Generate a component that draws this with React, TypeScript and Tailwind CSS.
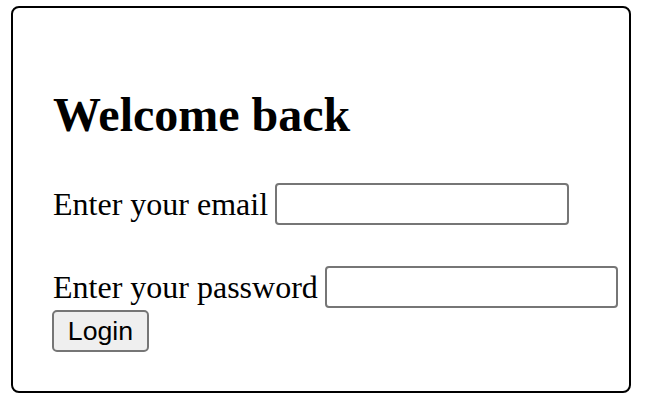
import React from "react";

export default function App() {
  return (
    <div className="w-[654px] h-[410px] bg-white pl-[11px] pt-[6px]">
      <div className="w-[620px] h-[387px] border-2 border-black rounded-[8px] px-[40px] pt-[40px] flex flex-col">
        <h2
          className="mt-[40px] text-[48px] leading-[53px] font-bold text-black whitespace-nowrap"
          style={{ fontFamily: '"Liberation Serif", "Times New Roman", serif' }}
        >
          Welcome back
        </h2>
        <form
          className="flex flex-col mt-[42px] text-black"
          style={{ fontFamily: '"Liberation Serif", "Times New Roman", serif' }}
          onSubmit={(e) => e.preventDefault()}
        >
          <div className="flex items-center h-[42px] gap-[7px]">
            <label className="text-[32px] leading-[36px] whitespace-nowrap shrink-0">Enter your email</label>
            <input
              type="email"
              className="w-[294px] h-[42px] shrink-0 border-2 border-[#767676] rounded-[4px] bg-white outline-none"
            />
          </div>
          <div className="flex items-center h-[42px] gap-[7px] mt-[41px]">
            <label className="text-[32px] leading-[36px] whitespace-nowrap shrink-0">Enter your password</label>
            <input
              type="password"
              className="w-[293px] h-[42px] shrink-0 border-2 border-[#767676] rounded-[4px] bg-white outline-none"
            />
          </div>
          <div className="mt-[2px]">
            <button
              type="submit"
              className="w-[97px] h-[42px] -ml-[1px] flex items-center justify-center bg-[#efefef] border-2 border-[#767676] rounded-[5px] text-[26.7px] leading-none text-black"
              style={{ fontFamily: '"Liberation Sans", Arial, sans-serif' }}
            >
              Login
            </button>
          </div>
        </form>
      </div>
    </div>
  );
}
